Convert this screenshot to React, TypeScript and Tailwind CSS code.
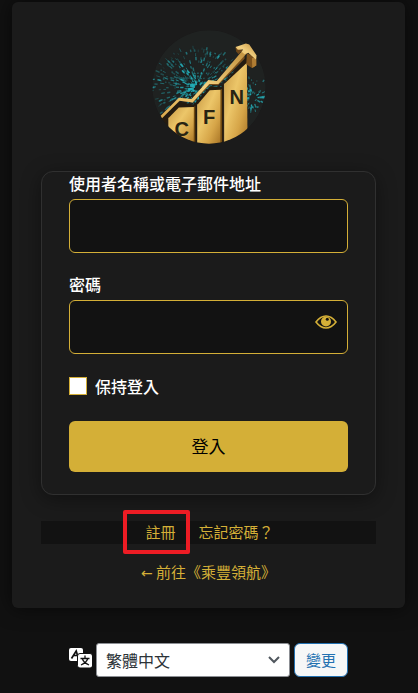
import { useState } from "react";

const fontStack =
  "font-['Noto_Sans_CJK_TC','Noto_Sans',sans-serif]";

interface Spark {
  x1: number;
  y1: number;
  x2: number;
  y2: number;
  width: number;
  opacity: number;
}

// Fixed-seed burst, so the logo looks the same on every load
function makeSparks(count: number, reach: number): Spark[] {
  let seed = 20;
  const next = () => {
    seed = (seed * 16807) % 2147483647;
    return seed / 2147483647;
  };
  return Array.from({ length: count }, () => {
    const angle = (Math.floor(next() * 64) / 64) * Math.PI * 2 + next() * 0.05;
    const t = next();
    const radius = 8 + t * reach;
    const length = 4 + next() * 9;
    const cx = 172;
    const cy = 205;
    return {
      x1: cx + Math.cos(angle) * radius,
      y1: cy + Math.sin(angle) * radius * 0.88,
      x2: cx + Math.cos(angle) * (radius + length),
      y2: cy + Math.sin(angle) * (radius + length) * 0.88,
      width: 2 + next() * 3,
      opacity: (0.35 + next() * 0.65) * (1 - t * 0.5),
    };
  });
}

const sparks = makeSparks(560, 126);
const sideSparks = makeSparks(110, 60);

function Sparks({ items }: { items: Spark[] }) {
  return (
    <>
      {items.map((s, i) => (
        <line key={i} x1={s.x1} y1={s.y1} x2={s.x2} y2={s.y2} strokeWidth={s.width} opacity={s.opacity} />
      ))}
    </>
  );
}

function Logo() {
  return (
    <svg viewBox="36 32 340 340" className="size-[114px]" role="img" aria-label="CFN">
      <defs>
        <clipPath id="logo-circle">
          <circle cx="206" cy="202" r="169" />
        </clipPath>
        <linearGradient id="bar" x1="0" y1="0" x2="1" y2="1">
          <stop offset="0" stopColor="#c99a45" />
          <stop offset="0.4" stopColor="#ecc669" />
          <stop offset="0.7" stopColor="#d6a548" />
          <stop offset="1" stopColor="#a87425" />
        </linearGradient>
        <linearGradient id="arrow" x1="0" y1="1" x2="1" y2="0">
          <stop offset="0" stopColor="#dba94b" />
          <stop offset="0.5" stopColor="#f2d080" />
          <stop offset="1" stopColor="#c08f3c" />
        </linearGradient>
      </defs>
      <g clipPath="url(#logo-circle)">
        <circle cx="206" cy="202" r="169" fill="#1f2221" />
        <g stroke="#27b0ba">
          <Sparks items={sparks} />
        </g>
        <g stroke="#27b0ba" transform="translate(164 28)">
          <Sparks items={sideSparks} />
        </g>
        <path d="M60 300 L118 246 L160 255 L210 200 L242 202 L318 112 L321 370 L60 375 Z" fill="#241b10" />
        <path d="M86 294 L116 263 L161 262 L161 372 L86 372 Z" fill="url(#bar)" />
        <path d="M161 262 L165 258 L165 372 L161 372 Z" fill="#70490f" />
        <path d="M172 254 L208 212 L241 210 L241 372 L172 372 Z" fill="url(#bar)" />
        <path d="M241 210 L245 207 L245 372 L241 372 Z" fill="#70490f" />
        <path d="M252 192 L319 130 L321 372 L252 372 Z" fill="url(#bar)" />
        <path d="M252 192 L252 372 M172 254 L172 372 M86 294 L86 372" stroke="#f3cf7a" strokeWidth="2" fill="none" />
      </g>
      {/* arrow: dark underside first, then the lit face */}
      <path d="M64 292 L120 243 L158 248 L209 195 L233 197 L312 118 L312 108 L231 188 L207 188 L156 242 L118 238 Z" fill="#7c511b" />
      <path d="M62 288 L116 234 L154 238 L204 181 L229 184 L306 93 L319 101 L234 193 L207 193 L157 248 L118 243 L66 295 Z" fill="url(#arrow)" />
      <path d="M285 84 L298 88 L306 93 L294 104 L287 96 Z" fill="#6b4518" />
      <path d="M319 101 L334 108 L347 120 L347 138 L334 145 L317 134 Z" fill="#7c511b" />
      <path d="M334 116 L347 112 L347 138 L335 145 Z" fill="#b07d33" />
      <path d="M285 83 L316 72 L326 75 L348 108 L346 120 L323 100 L312 104 L303 97 L308 90 L292 91 Z" fill="url(#arrow)" />
      <g fill="#282313" className="font-['Liberation_Sans',sans-serif] font-bold">
        <text x="103" y="347" fontSize="60">C</text>
        <text x="188" y="313" fontSize="60">F</text>
        <text x="267" y="253" fontSize="60">N</text>
      </g>
    </svg>
  );
}

function EyeIcon() {
  return (
    <svg viewBox="0 0 22 14" className="h-[14px] w-[22px]" aria-hidden="true">
      <path d="M1 7 Q5.5 1 11 1 Q16.5 1 21 7 Q16.5 13 11 13 Q5.5 13 1 7 Z" fill="none" stroke="#d4af37" strokeWidth="1.6" />
      <circle cx="11" cy="6.5" r="5" fill="#d4af37" />
      <circle cx="12.3" cy="4.3" r="1.5" fill="#131313" />
    </svg>
  );
}

function TranslateIcon() {
  return (
    <svg viewBox="0 0 23 20" className="h-5 w-[23px] shrink-0" aria-hidden="true">
      <rect x="0" y="0" width="14" height="13" rx="2" fill="#fff" />
      <path d="M2.5 10.5 L7.2 3 L9 9 M4.5 7.5 H9" fill="none" stroke="#131313" strokeWidth="1.7" />
      <rect x="8.5" y="5.5" width="15" height="14.500" rx="2.500" fill="#fff" stroke="#131313" />
      <path d="M16 7.500 V10 M11.500 10.500 H20.500 M18.800 10.500 Q17.500 14.500 12 17 M13.200 10.500 Q14.500 14.500 20 17" fill="none" stroke="#131313" strokeWidth="1.3" />
    </svg>
  );
}

export default function App() {
  const [showPassword, setShowPassword] = useState(false);

  return (
    <div className={`min-h-screen bg-[#111111] pt-[2px] pr-[13px] pb-4 pl-3 ${fontStack}`}>
      <main className="rounded-md bg-[#1b1b1b] px-[29px] pt-7 pb-6 shadow-[0_0_20px_rgba(0,0,0,0.6)]">
        <h1 className="flex justify-center">
          <a href="#home">
            <Logo />
          </a>
        </h1>

        <form
          className="mt-[27px] rounded-xl border border-[#303030] px-[27px] pb-[22px] shadow-[0_4px_20px_rgba(0,0,0,0.4)]"
          onSubmit={(e) => e.preventDefault()}
        >
          <label htmlFor="user" className="mb-1 block text-base leading-[23px] font-medium text-white">
            使用者名稱或電子郵件地址
          </label>
          <input
            id="user"
            type="text"
            className="block h-[54px] w-full rounded-md border border-[#d4af37] bg-[#121212] px-3 text-white"
          />

          <label htmlFor="pass" className="mt-5 mb-1 block text-base leading-[23px] font-medium text-white">
            密碼
          </label>
          <div className="relative">
            <input
              id="pass"
              type={showPassword ? "text" : "password"}
              className="block h-[54px] w-full rounded-md border border-[#d4af37] bg-[#121212] pr-12 pl-3 text-white"
            />
            <button
              type="button"
              aria-label="顯示密碼"
              className="absolute top-0 right-0 flex h-11 w-11 items-center justify-center"
              onClick={() => setShowPassword(!showPassword)}
            >
              <EyeIcon />
            </button>
          </div>

          <div className="mt-5 flex h-6 items-center gap-2">
            <input
              id="remember"
              type="checkbox"
              className="size-[18px] appearance-none border border-[#d4af37] bg-white checked:bg-[#d4af37]"
            />
            <label htmlFor="remember" className="text-base leading-[22px] font-medium text-white">
              保持登入
            </label>
          </div>

          <button
            type="submit"
            className="mt-[23px] block h-[51px] w-full rounded-md bg-[#d4af37] pb-[2px] text-[17px] text-black"
          >
            登入
          </button>
        </form>

        <nav className="mt-[26px] flex h-[23px] items-center justify-center bg-[#121212] text-[15px] text-[#d4af37]">
          <a href="#register" className="relative pl-[2px] pr-[11px]">
            註冊
            <span className="pointer-events-none absolute -top-[11px] -right-[3px] -left-5 h-11 rounded-xs border-4 border-[#ed1c24]" />
          </a>
          <span className="h-[14px] w-px bg-[#5a3a20]" />
          <a href="#lost" className="pl-[11px]">
            忘記密碼？
          </a>
        </nav>

        <p className="mt-4 text-center text-[15px] leading-6 text-[#d4af37]">
          <a href="#back">
            <span className="font-['DejaVu_Sans',sans-serif] text-sm leading-none">←</span> 前往《乘豐領航》
          </a>
        </p>
      </main>

      <form
        className="mt-[35px] flex items-center gap-1 pr-[57px] pl-[57px]"
        onSubmit={(e) => e.preventDefault()}
      >
        <label htmlFor="lang" aria-label="語言" className="pb-1">
          <TranslateIcon />
        </label>
        <div className="relative min-w-0 flex-1">
          <select
            id="lang"
            className="block h-[34px] w-full appearance-none rounded-[3px] border border-[#8c8f94] bg-white pr-8 pb-px pl-[9px] text-base leading-7 text-[#2c3338]"
          >
            <option>繁體中文</option>
            <option>English</option>
          </select>
          <svg
            viewBox="0 0 12 8"
            className="pointer-events-none absolute top-[13px] right-[10px] h-2 w-3"
            aria-hidden="true"
          >
            <path d="M1 1 L6 6 L11 1" fill="none" stroke="#50575e" strokeWidth="2" />
          </svg>
        </div>
        <button
          type="submit"
          className="h-[34px] w-[54px] rounded-md border border-[#2271b1] bg-[#f6f7f7] text-[15px] text-[#2271b1]"
        >
          變更
        </button>
      </form>
    </div>
  );
}
